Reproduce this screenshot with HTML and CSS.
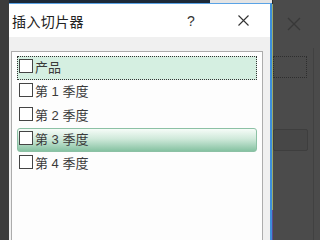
FILE: index.html
```html
<!DOCTYPE html>
<html lang="zh-CN">
<head>
  <meta charset="UTF-8" />
  <title>插入切片器</title>
  <link rel="stylesheet" href="styles.css">
</head>
<body>
  <div class="screen">
    <div class="left-strip"></div>

    <div class="window">
      <div class="window-top"></div>
      <div class="dialog">
        <div class="title-bar">
          <span class="title">插入切片器</span>
          <span class="help">?</span>
          <svg class="close" width="11" height="11" viewBox="0 0 11 11">
            <path d="M0.5 0.5 L10.5 10.5 M10.5 0.5 L0.5 10.5" stroke="#333" stroke-width="1.1" fill="none"/>
          </svg>
        </div>

        <div class="body">
          <div class="list">
            <div class="item focused"><span class="check"></span><span>产品</span></div>
            <div class="item"><span class="check"></span><span>第 1 季度</span></div>
            <div class="item"><span class="check"></span><span>第 2 季度</span></div>
            <div class="item selected"><span class="check"></span><span>第 3 季度</span></div>
            <div class="item"><span class="check"></span><span>第 4 季度</span></div>
          </div>
        </div>
      </div>
    </div>

    <div class="edge"></div>

    <div class="backdrop">
      <div class="ghost-close">
        <svg width="14" height="14" viewBox="0 0 14 14">
          <path d="M1 1 L13 13 M13 1 L1 13" stroke="#383838" stroke-width="1.3" fill="none"/>
        </svg>
      </div>
      <div class="ghost-panel">
        <div class="ghost-focus"></div>
        <div class="ghost-button"></div>
      </div>
    </div>
  </div>
</body>
</html>
```

FILE: styles.css
```css
body {
  margin: 0;
  background: #4b4b4b;
  font-family: "Noto Sans CJK SC", "Noto Sans", sans-serif;
  overflow: hidden;
}

.screen {
  display: flex;
  width: 320px;
  height: 240px;
}

.left-strip {
  width: 9px;
  background: #3c3c3c;
}

.window {
  width: 263px;
  display: flex;
  flex-direction: column;
}

.window-top {
  height: 3px;
  background: linear-gradient(to right, #1d2a38 0, #1d2a38 201px, #e4e4e4 201px);
}

.dialog {
  flex: 1;
  display: flex;
  flex-direction: column;
  background: #fff;
  border-top: 1px solid #5aa3e6;
  border-right: 2px solid #3d8fdb;
}

.title-bar {
  height: 33px;
  display: flex;
  align-items: center;
  padding-left: 3px;
  color: #222;
}

.title {
  flex: 1;
  font-size: 14px;
  letter-spacing: 0.4px;
}

.help {
  width: 10px;
  text-align: center;
  font-family: "Liberation Sans", sans-serif;
  font-size: 14px;
  color: #333;
}

.close {
  margin-left: 42px;
  margin-right: 21px;
}

.body {
  flex: 1;
  display: flex;
  background: #f0f0f0;
  padding: 14px 7px 0 2px;
}

.list {
  flex: 1;
  background: #fdfdfd;
  border: 1px solid #acacac;
  border-bottom: none;
  padding: 4px 5px 0 5px;
}

.item {
  height: 22px;
  border: 1px solid transparent;
  display: flex;
  align-items: flex-start;
  gap: 2px;
  font-family: "Liberation Sans", "Noto Sans CJK SC", sans-serif;
  font-size: 13px;
  line-height: 21px;
  color: #3a3a3a;
}

.check {
  width: 12px;
  height: 12px;
  margin: 2px 0 0 1px;
  border: 1px solid #444;
  background: #fff;
  flex-shrink: 0;
}

.item.focused {
  background: #d5efe1;
  border: 1px dotted #333;
}

.item.selected {
  background: linear-gradient(to bottom, #f6fcf8 0%, #cfe9da 45%, #86c2a2 100%);
  border: 1px solid #8cc1a5;
  border-radius: 3px;
}

.edge {
  width: 1px;
  background: linear-gradient(to bottom, #2a2a2a 0, #2a2a2a 4px, #9aab6c 4px, #9aab6c 210px, #5d4b95 210px);
}

.backdrop {
  flex: 1;
  display: flex;
  flex-direction: column;
}

.ghost-close {
  height: 48px;
  padding: 12px 0 0 14px;
  box-sizing: border-box;
}

.ghost-panel {
  flex: 1;
  width: 41px;
  border-right: 1px solid #414141;
  box-sizing: border-box;
}

.ghost-focus {
  margin-top: 8px;
  width: 34px;
  height: 22px;
  border: 1px dotted #2e2e2e;
  box-sizing: border-box;
}

.ghost-button {
  margin-top: 51px;
  width: 35px;
  height: 22px;
  border: 1px solid #3e3e3e;
  border-radius: 2px;
  background: #474747;
  box-sizing: border-box;
}
```
